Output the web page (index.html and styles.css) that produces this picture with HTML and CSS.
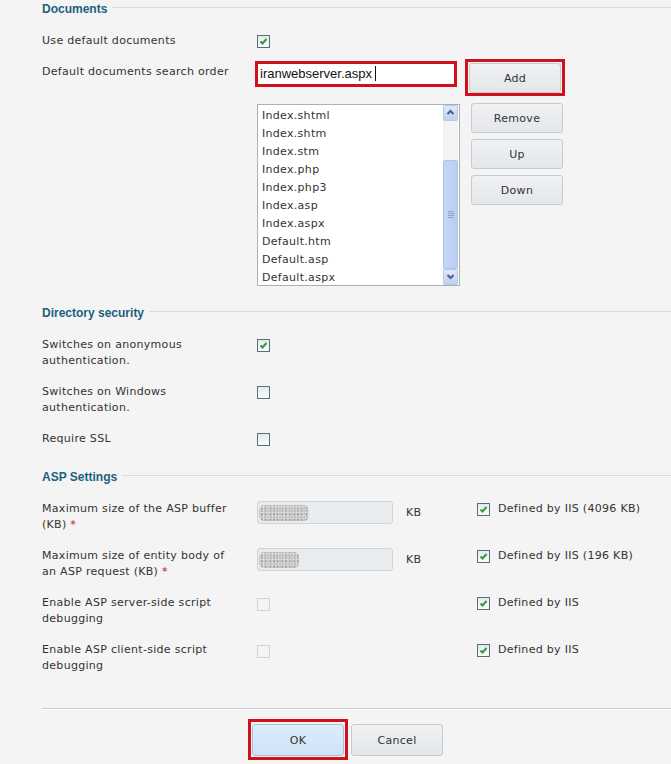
FILE: index.html
```html
<!DOCTYPE html>
<html lang="en">
  <head>
    <meta charset="UTF-8" />
    <meta name="viewport" content="width=device-width, initial-scale=1.0" />
    <title>Default documents</title>
    <link rel="stylesheet" href="styles.css">
  </head>
  <body>
    <div class="page">
      <section class="group">
        <h2 class="legend">Documents</h2>
        <div class="row row-first">
          <span class="lbl">Use default documents</span>
          <div class="ctl">
            <span class="cb on"><svg viewBox="0 0 11 11"><path d="M2.5 5.5l2 2L8.5 3" /></svg></span>
          </div>
        </div>
        <div class="row row-docs">
          <span class="lbl lbl-docs">Default documents search order</span>
          <div class="ctl ctl-docs">
            <div class="hl hl-input">
              <div class="text-input">iranwebserver.aspx <span class="caret"></span></div>
            </div>
            <div class="hl hl-add">
              <button class="btn">Add</button>
            </div>
          </div>
        </div>
        <div class="list-row">
          <div class="listbox">
            <ul class="items">
              <li>Index.shtml</li>
              <li>Index.shtm</li>
              <li>Index.stm</li>
              <li>Index.php</li>
              <li>Index.php3</li>
              <li>Index.asp</li>
              <li>Index.aspx</li>
              <li>Default.htm</li>
              <li>Default.asp</li>
              <li>Default.aspx</li>
            </ul>
            <div class="scrollbar">
              <div class="sb-btn"><svg viewBox="0 0 13 13"><path d="M3.5 8l3-3 3 3" /></svg></div>
              <div class="sb-track">
                <div class="sb-thumb"><span class="grip"></span></div>
              </div>
              <div class="sb-btn"><svg viewBox="0 0 13 13"><path d="M3.5 5l3 3 3-3" /></svg></div>
            </div>
          </div>
          <div class="btn-col">
            <button class="btn">Remove</button>
            <button class="btn">Up</button>
            <button class="btn">Down</button>
          </div>
        </div>
      </section>

      <section class="group">
        <h2 class="legend">Directory security</h2>
        <div class="row">
          <span class="lbl">Switches on anonymous authentication.</span>
          <div class="ctl">
            <span class="cb on"><svg viewBox="0 0 11 11"><path d="M2.5 5.5l2 2L8.5 3" /></svg></span>
          </div>
        </div>
        <div class="row">
          <span class="lbl">Switches on Windows authentication.</span>
          <div class="ctl"><span class="cb"></span></div>
        </div>
        <div class="row">
          <span class="lbl">Require SSL</span>
          <div class="ctl"><span class="cb"></span></div>
        </div>
      </section>

      <section class="group group-asp">
        <h2 class="legend">ASP Settings</h2>
        <div class="row row-asp">
          <span class="lbl">Maximum size of the ASP buffer (KB)&nbsp;<span class="req">*</span></span>
          <div class="ctl ctl-kb">
            <div class="masked"><span class="smudge"></span></div>
            <span class="unit">KB</span>
          </div>
          <label class="iis"><span class="cb on"><svg viewBox="0 0 11 11"><path d="M2.5 5.5l2 2L8.5 3" /></svg></span>Defined by IIS (4096 KB)</label>
        </div>
        <div class="row row-asp">
          <span class="lbl">Maximum size of entity body of an ASP request (KB)&nbsp;<span class="req">*</span></span>
          <div class="ctl ctl-kb">
            <div class="masked"><span class="smudge smudge-short"></span></div>
            <span class="unit">KB</span>
          </div>
          <label class="iis"><span class="cb on"><svg viewBox="0 0 11 11"><path d="M2.5 5.5l2 2L8.5 3" /></svg></span>Defined by IIS (196 KB)</label>
        </div>
        <div class="row row-asp">
          <span class="lbl">Enable ASP server-side script debugging</span>
          <div class="ctl"><span class="cb off"></span></div>
          <label class="iis"><span class="cb on"><svg viewBox="0 0 11 11"><path d="M2.5 5.5l2 2L8.5 3" /></svg></span>Defined by IIS</label>
        </div>
        <div class="row row-asp">
          <span class="lbl">Enable ASP client-side script debugging</span>
          <div class="ctl"><span class="cb off"></span></div>
          <label class="iis"><span class="cb on"><svg viewBox="0 0 11 11"><path d="M2.5 5.5l2 2L8.5 3" /></svg></span>Defined by IIS</label>
        </div>
      </section>

      <div class="sep"></div>

      <div class="actions">
        <div class="hl hl-ok">
          <button class="btn btn-ok">OK</button>
        </div>
        <button class="btn btn-cancel">Cancel</button>
      </div>
    </div>
  </body>
</html>
```

FILE: styles.css
```css
body {
  margin: 0;
  padding: 0;
  background: #f4f4f4;
  color: #333;
  font-family: "DejaVu Sans", sans-serif;
  font-size: 11px;
  line-height: 16px;
  letter-spacing: 0.3px;
}
.page {
  padding: 1px 0 0 42px;
}
.legend {
  display: flex;
  align-items: center;
  gap: 5px;
  margin: 0 0 16px;
  font-family: "Liberation Sans", Arial, sans-serif;
  font-size: 12px;
  font-weight: bold;
  line-height: 16px;
  letter-spacing: 0;
  color: #1d5f7f;
}
.legend::after {
  content: "";
  flex: 1;
  height: 1px;
  margin-top: -3px;
  background: #dadada;
}
.group-asp {
  margin-top: 8px;
}
.row {
  display: grid;
  grid-template-columns: 215px 1fr;
  padding-bottom: 15px;
}
.row:last-child {
  padding-bottom: 14px;
}
.row-first {
  padding-bottom: 10px;
}
.row-docs {
  padding-bottom: 0;
}
.row-asp {
  grid-template-columns: 215px 220px 1fr;
}
.lbl {
  width: 198px;
}
.lbl-docs {
  margin-top: 5px;
}
.req {
  color: #c0141c;
}
.ctl {
  display: flex;
  align-items: flex-start;
}
.ctl-docs {
  gap: 8px;
}

/* checkboxes */
.cb {
  display: inline-block;
  flex: none;
  box-sizing: border-box;
  width: 13px;
  height: 13px;
  margin-top: 2px;
  border: 1px solid #55707e;
  background: linear-gradient(#e6e9eb, #fbfbfb);
}
.cb svg {
  display: block;
  width: 11px;
  height: 11px;
}
.cb path {
  fill: none;
  stroke: #2f9b3c;
  stroke-width: 2;
}
.cb.off {
  margin-top: 3px;
  border-color: #d2d2d2;
  background: #f4f4f4;
}

/* red highlight boxes */
.hl {
  border: 3px solid #d0101a;
}
.hl-input {
  margin: 2px 0 0 -2px;
  width: 196px;
  height: 20px;
  background: #fff;
}
.text-input {
  padding: 0 2px;
  font-family: "Liberation Sans", Arial, sans-serif;
  font-size: 13px;
  line-height: 20px;
  letter-spacing: 0;
  color: #111;
}
.caret {
  display: inline-block;
  width: 1px;
  height: 15px;
  margin-left: -1px;
  vertical-align: -3px;
  background: #111;
}
.hl-add {
  padding: 1px 1px 0;
}

.btn {
  display: block;
  box-sizing: border-box;
  width: 92px;
  height: 30px;
  padding: 0;
  border: 1px solid #c6cbd0;
  border-radius: 3px;
  background: linear-gradient(#eff1f3, #e4e7ea);
  font-family: "DejaVu Sans", sans-serif;
  font-size: 11px;
  letter-spacing: 0.3px;
  color: #333;
}

/* list */
.list-row {
  display: flex;
  gap: 11px;
  margin: 8px 0 0 215px;
  padding-bottom: 19px;
}
.listbox {
  display: flex;
  width: 201px;
  height: 180px;
  border: 1px solid #a9b0b6;
  background: #fff;
}
.items {
  flex: 1;
  margin: 0;
  padding: 2px 0 0 4px;
  list-style: none;
}
.items li {
  height: 18px;
  line-height: 18px;
}
.scrollbar {
  display: flex;
  flex-direction: column;
  width: 15px;
  margin-right: 1px;
  background: #f3f3ef;
}
.sb-btn {
  box-sizing: border-box;
  height: 16px;
  border: 1px solid #b7c8e6;
  border-radius: 2px;
  background: linear-gradient(#dfe8fb, #c0d0f2);
}
.sb-btn svg {
  display: block;
  width: 13px;
  height: 13px;
}
.sb-btn path {
  fill: none;
  stroke: #4a5f86;
  stroke-width: 2;
}
.sb-track {
  flex: 1;
  padding-top: 39px;
}
.sb-thumb {
  box-sizing: border-box;
  display: flex;
  align-items: center;
  justify-content: center;
  height: 109px;
  border: 1px solid #b0c2ea;
  border-radius: 2px;
  background: linear-gradient(90deg, #c5d5f7, #bccdf3);
}
.grip {
  width: 6px;
  height: 7px;
  background: repeating-linear-gradient(#8ea2cc 0 1px, transparent 1px 2px);
}
.btn-col {
  display: flex;
  flex-direction: column;
  gap: 6px;
  margin-top: -1px;
}

/* masked number inputs */
.ctl-kb {
  gap: 13px;
}
.masked {
  box-sizing: border-box;
  width: 136px;
  height: 23px;
  padding: 3px 1px;
  border: 1px solid #cdd3d8;
  border-radius: 3px;
  background: #e8ecef;
}
.smudge {
  display: block;
  width: 50px;
  height: 16px;
  border-radius: 5px;
  background-color: #c4c4c4;
  background-image: radial-gradient(#ebebeb 0.6px, transparent 1.1px),
    radial-gradient(#a2a2a2 0.7px, transparent 1.2px),
    radial-gradient(#dcdcdc 0.5px, transparent 1px);
  background-size: 3px 3px, 4px 5px, 5px 3px;
  background-position: 0 0, 1px 2px, 2px 1px;
  filter: blur(0.3px);
}
.smudge-short {
  width: 40px;
}
.unit {
  line-height: 23px;
}
.iis {
  display: flex;
  align-items: flex-start;
  gap: 8px;
}

.sep {
  margin-top: 20px;
  border-top: 1px solid #cbcbcb;
  border-bottom: 1px solid #fff;
}
.actions {
  display: flex;
  align-items: flex-start;
  gap: 3px;
  margin-top: 9px;
  padding-left: 206px;
}
.hl-ok {
  padding: 2px 1px 1px;
}
.btn-ok {
  height: 32px;
  border-color: #a9bfd6;
  background: linear-gradient(#dcecfb, #cfe3f6);
}
.btn-cancel {
  height: 32px;
  margin-top: 5px;
}
```
